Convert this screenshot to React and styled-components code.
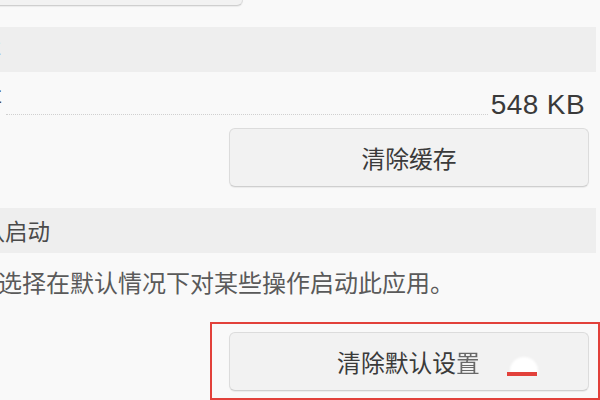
import React from "react";
import styled, { createGlobalStyle } from "styled-components";

const Global = createGlobalStyle`
  html, body { margin: 0; padding: 0; background: #f9f9f9; }
  body { width: 600px; height: 400px; overflow: hidden; }
  #root { width: 600px; height: 400px; overflow: hidden; }
`;

const cjk = `"Noto Sans CJK SC", "Noto Sans", sans-serif`;

const Page = styled.div`
  width: 600px;
  height: 400px;
  display: flex;
  flex-direction: column;
  background: #f9f9f9;
  font-family: ${cjk};
  overflow: hidden;
`;

const Button = styled.div`
  box-sizing: border-box;
  width: ${(p) => p.$w || 360}px;
  height: ${(p) => p.$h || 59}px;
  border: 1px solid #dcdcdc;
  border-bottom-color: #cfcfcf;
  border-radius: 6px;
  background: #f2f2f2;
  box-shadow: 0 1px 1px rgba(0, 0, 0, 0.06);
  display: flex;
  align-items: center;
  justify-content: center;
  font-size: 23.8px;
  color: #3a3a3a;
  flex-shrink: 0;
`;

const TopButton = styled(Button)`
  margin-top: -35px;
  margin-left: -20px;
`;

const SectionHeader = styled.div`
  box-sizing: border-box;
  width: 596px;
  height: ${(p) => p.$h}px;
  margin-top: 21px;
  background: #eeeeee;
  display: flex;
  align-items: center;
  font-size: 22.5px;
  color: #4a4a4a;
  white-space: nowrap;
  overflow: hidden;
`;

const Shifted = styled.span`
  margin-left: ${(p) => p.$shift}px;
  line-height: 1;
`;

const InfoRow = styled.div`
  display: flex;
  align-items: flex-end;
  height: 46px;
  padding-right: 15px;
  white-space: nowrap;
  overflow: hidden;
`;

const RowLabel = styled.span`
  font-size: 23px;
  color: #4a4a4a;
  margin-left: ${(p) => p.$shift}px;
  line-height: 1;
  margin-bottom: 9px;
`;

const Leader = styled.div`
  flex: 1;
  align-self: flex-end;
  margin: 0 3px 3px 4px;
  border-bottom: 1px dotted #d0d0d0;
`;

const Value = styled.span`
  font-family: "Liberation Sans", Arial, sans-serif;
  font-size: 28px;
  letter-spacing: 0.4px;
  color: #3a3a3a;
  line-height: 1;
  margin-bottom: -1px;
`;

const ButtonRow = styled.div`
  display: flex;
  justify-content: flex-end;
  padding-right: 11px;
  margin-top: 10px;
`;

const Description = styled.div`
  margin-top: 13px;
  margin-left: -2px;
  font-size: 24px;
  line-height: 32px;
  color: #5a5a5a;
  white-space: nowrap;
`;

const Highlight = styled.div`
  position: relative;
  box-sizing: border-box;
  margin-top: 24px;
  margin-left: 210px;
  width: 390px;
  height: 78px;
  border: 2.5px solid #e2413b;
  padding: 7.5px 0 0 16.5px;
  display: flex;
`;

const Blurred = styled.span`
  opacity: 0.75;
`;

const Blob = styled.div`
  position: absolute;
  left: 298px;
  top: 33px;
  width: 28px;
  height: 18px;
  border-radius: 14px 14px 2px 2px;
  background: #ffffff;
  filter: blur(1px);
`;

const Dash = styled.div`
  position: absolute;
  left: 295px;
  top: 48px;
  width: 30px;
  height: 4px;
  background: #e2413b;
`;

export default function App() {
  return (
    <Page>
      <Global />
      <TopButton $w={263} $h={41} />
      <SectionHeader $h={45}>
        <Shifted $shift={-44}>缓存</Shifted>
      </SectionHeader>
      <InfoRow>
        <RowLabel $shift={-44}>缓存</RowLabel>
        <Leader />
        <Value>548 KB</Value>
      </InfoRow>
      <ButtonRow>
        <Button>清除缓存</Button>
      </ButtonRow>
      <SectionHeader $h={46}>
        <Shifted $shift={-40}>默认启动</Shifted>
      </SectionHeader>
      <Description>选择在默认情况下对某些操作启动此应用。</Description>
      <Highlight>
        <Button>
          清除默认设<Blurred>置</Blurred>
        </Button>
        <Blob />
        <Dash />
      </Highlight>
    </Page>
  );
}
